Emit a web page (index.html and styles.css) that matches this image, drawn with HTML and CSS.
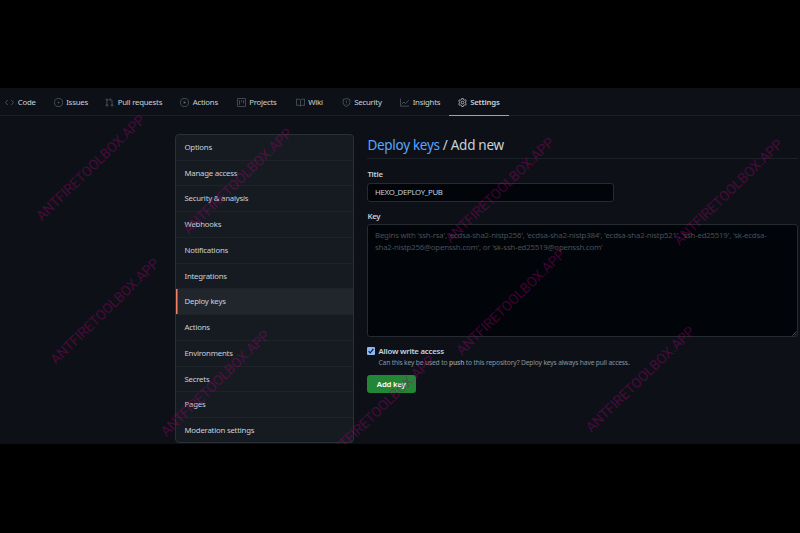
FILE: index.html
```html
<!DOCTYPE html>
<html lang="en">
<head>
<meta charset="utf-8">
<title>Deploy keys</title>
<link rel="stylesheet" href="styles.css">
</head>
<body>
<div class="page">
  <nav class="tabs">
    <a class="tab code"><svg viewBox="0 0 16 16"><path d="M5 3.5 1 8l4 4.5M11 3.5 15 8l-4 4.5"/></svg><span>Code</span></a>
    <a class="tab issues"><svg viewBox="0 0 16 16"><circle cx="8" cy="8" r="7.2"/><circle class="solid" cx="8" cy="8" r="1.5"/></svg><span>Issues</span></a>
    <a class="tab pulls"><svg viewBox="0 0 16 16"><circle cx="3.5" cy="3" r="1.6"/><circle cx="3.5" cy="13" r="1.6"/><circle cx="12.5" cy="13" r="1.6"/><path d="M3.5 4.6v6.8M12.5 11.4V5q0-2-2-2H7.5M10 .7 7.6 3 10 5.3"/></svg><span>Pull requests</span></a>
    <a class="tab actions"><svg viewBox="0 0 16 16"><circle cx="8" cy="8" r="7.2"/><path class="solid" d="M6.5 5.3v5.4L11 8z"/></svg><span>Actions</span></a>
    <a class="tab projects"><svg viewBox="0 0 16 16"><rect x=".8" y=".8" width="14.4" height="14.4" rx="1"/><path d="M4.5 4v8M8 4v3M11.5 4v5.5"/></svg><span>Projects</span></a>
    <a class="tab wiki"><svg viewBox="0 0 16 16"><path d="M8 4Q7 2 4.500 2H.8v11H5q2 0 3 1.500Q9 13 11 13h4.200V2H11.500Q9 2 8 4v10"/></svg><span>Wiki</span></a>
    <a class="tab security"><svg viewBox="0 0 16 16"><path d="m8 .8 6 2V8q0 5-6 7.200Q2 13 2 8V2.800zM8 4.500v4M8 10.300v1.500"/></svg><span>Security</span></a>
    <a class="tab insights"><svg viewBox="0 0 16 16"><path d="M.8 1v13.500H16M3.500 11 7 7l3 3 5.500-6"/></svg><span>Insights</span></a>
    <a class="tab settings current"><svg viewBox="0 0 16 16"><path d="M6.700.8h2.600l.6 2.200 1.300.8 2.200-.7 1.400 2.300-1.600 1.700v1.800l1.600 1.700-1.400 2.300-2.200-.7-1.300.8-.6 2.200H6.700L6.100 13l-1.300-.8-2.200.7-1.400-2.300 1.600-1.700V7.100L1.200 5.400l1.400-2.300 2.200.7L6.100 3z"/><circle cx="8" cy="8" r="2.400"/></svg><span>Settings</span></a>
  </nav>
  <div class="columns">
    <ul class="menu">
      <li>Options</li>
      <li>Manage access</li>
      <li>Security &amp; analysis</li>
      <li>Webhooks</li>
      <li>Notifications</li>
      <li>Integrations</li>
      <li class="selected">Deploy keys</li>
      <li>Actions</li>
      <li>Environments</li>
      <li>Secrets</li>
      <li>Pages</li>
      <li>Moderation settings</li>
    </ul>
    <main class="content">
      <h1><a>Deploy keys</a> / Add new</h1>
      <div class="label">Title</div>
      <div class="input">HEXO_DEPLOY_PUB</div>
      <div class="label key">Key</div>
      <div class="area">Begins with 'ssh-rsa', 'ecdsa-sha2-nistp256', 'ecdsa-sha2-nistp384', 'ecdsa-sha2-nistp521', 'ssh-ed25519', 'sk-ecdsa-<br>sha2-nistp256@openssh.com', or 'sk-ssh-ed25519@openssh.com'
        <svg class="grip" viewBox="0 0 6 6"><path d="M.5 5.500l5-5M3.300 5.500l2.200-2.200"/></svg>
      </div>
      <div class="check"><svg viewBox="0 0 8 8"><rect width="8" height="8" rx="1"/><path d="m1.600 4.200 1.600 1.600 3.200-3.800"/></svg><b>Allow write access</b></div>
      <p class="note">Can this key be used to <b>push</b> to this repository? Deploy keys always have pull access.</p>
      <div class="button">Add key</div>
    </main>
  </div>
  <svg class="marks" viewBox="0 88 800 356">
    <g text-anchor="middle">
      <text transform="translate(90.500 167.500) rotate(-44)" y="5" textLength="145">ANTFIRETOOLBOX.APP</text>
      <text transform="translate(237.500 181) rotate(-44)" y="5" textLength="145">ANTFIRETOOLBOX.APP</text>
      <text transform="translate(499.500 190) rotate(-44)" y="5" textLength="145">ANTFIRETOOLBOX.APP</text>
      <text transform="translate(728 192) rotate(-44)" y="5" textLength="145">ANTFIRETOOLBOX.APP</text>
      <text transform="translate(104.500 311) rotate(-44)" y="5" textLength="145">ANTFIRETOOLBOX.APP</text>
      <text transform="translate(215 383) rotate(-44)" y="5" textLength="145">ANTFIRETOOLBOX.APP</text>
      <text transform="translate(510.500 302) rotate(-44)" y="5" textLength="145">ANTFIRETOOLBOX.APP</text>
      <text transform="translate(640 379) rotate(-44)" y="5" textLength="145">ANTFIRETOOLBOX.APP</text>
      <text transform="translate(380 408) rotate(-44)" y="5" textLength="145">ANTFIRETOOLBOX.APP</text>
    </g>
  </svg>
</div>
</body>
</html>
```
FILE: styles.css
```css
* { box-sizing: border-box; }
body { margin: 0; height: 533px; padding-top: 88px; background: #000; overflow: hidden; font-family: "Noto Sans", "Open Sans", sans-serif; font-size: 7.8px; letter-spacing: -.22px; color: #c9d1d9; }
.page { position: relative; height: 356px; background: #0d1117; overflow: hidden; }
.tabs { display: grid; grid-template-columns: 48.500px 51.500px 75px 56.500px 59px 46px 58.500px 57.500px 51px; height: 28px; padding-left: 5px; border-bottom: 1px solid #1b2027; }
.tab { display: flex; align-items: center; gap: 3.700px; height: 28px; white-space: nowrap; }
.tab svg { width: 9px; height: 9px; flex: none; fill: none; stroke: #596069; stroke-width: 1.3; }
.tab .solid { fill: #596069; stroke: none; }
.current { position: relative; font-weight: 600; }
.current svg { stroke: #c9d1d9; }
.current::after { content: ""; position: absolute; left: -8.500px; top: 26.800px; width: 59.500px; height: 1.400px; background: #f78166; }
.columns { display: flex; gap: 13px; padding: 18px 2.500px 0 175px; }
.menu { list-style: none; margin: 0; padding: 0; width: 179px; height: 309px; flex: none; border: 1px solid #2b3037; border-radius: 4px; background: #161b22; overflow: hidden; }
.menu li { height: 25.740px; padding-left: 8.500px; line-height: 25.700px; border-bottom: 1px solid #1e2329; }
.menu li:last-child { border-bottom: 0; }
.menu .selected { background: #21262c; box-shadow: inset 1.500px 0 #f78166; }
.content { flex: 1; min-width: 0; }
h1 { margin: 0; height: 25px; padding-left: .5px; border-bottom: 1px solid #1c2128; font-size: 13.500px; letter-spacing: -.3px; line-height: 22px; font-weight: 400; white-space: nowrap; }
h1 a { color: #58a6ff; }
.label { height: 10px; margin-top: 10px; padding-left: .4px; line-height: 10px; font-weight: 600; letter-spacing: -.25px; }
.input { width: 247px; height: 18.500px; margin-top: 4px; padding-left: 7px; border: 1px solid #262b31; border-radius: 3px; background: #010409; line-height: 17px; letter-spacing: -.3px; }
.label.key { margin-top: 9px; }
.area { position: relative; height: 112.500px; margin-top: 3.500px; padding: 5px 7px; border: 1px solid #262b31; border-radius: 3px; background: #010409; color: #484f58; line-height: 11.800px; letter-spacing: -.19px; white-space: nowrap; }
.grip { position: absolute; right: 0; bottom: 0; width: 5px; height: 5px; fill: none; stroke: #777; stroke-width: .8; }
.check { display: flex; align-items: center; gap: 3.500px; height: 10px; margin-top: 9px; }
.check b { font-weight: 600; letter-spacing: -.22px; }
.check svg { width: 8px; height: 8px; }
.check rect { fill: #8ab9f5; }
.check path { fill: none; stroke: #111b2b; stroke-width: 1.200; }
.note { margin: 2px 0 0 11.500px; height: 11px; font-size: 6.700px; line-height: 10px; letter-spacing: -.16px; color: #8b949e; white-space: nowrap; }
.note b { font-weight: 600; }
.button { width: 48.500px; height: 18px; margin-top: 6px; border-radius: 3px; background: #238636; color: #fff; font-weight: 600; line-height: 18px; text-align: center; }
.marks { position: absolute; inset: 0; width: 800px; height: 356px; pointer-events: none; }
.marks text { font-family: Roboto, sans-serif; font-size: 14px; letter-spacing: 0; fill: #a00070; fill-opacity: .42; }
```
